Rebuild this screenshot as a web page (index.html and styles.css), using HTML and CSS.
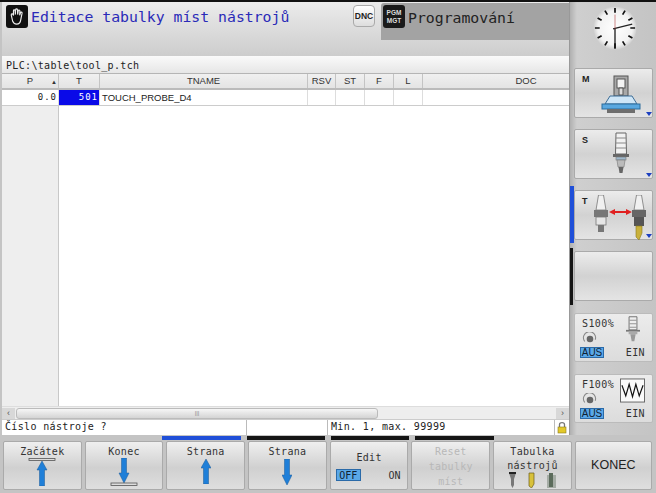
FILE: index.html
```html
<!DOCTYPE html>
<html lang="cs">
<head>
<meta charset="utf-8">
<title>Editace tabulky</title>
<link rel="stylesheet" href="styles.css">
</head>
<body>
<div class="screen">
  <div class="top">
    <main class="main">
      <header class="head">
        <div class="title-row">
          <svg class="hand" width="22" height="23" viewBox="0 0 23 24"><rect width="23" height="24" rx="3" fill="#111"/><path d="M7 17 L5.500 10.500 C5.300 9 7 8.800 7.400 10 L7.800 11 L7.800 6 C7.800 4.800 9.300 4.800 9.500 6 L9.800 10 L10 5 C10.200 3.800 11.800 3.800 12 5 L12.200 10 L12.800 6 C13 4.800 14.500 5 14.500 6.200 L14.300 10.800 L15.200 8 C15.600 7 17 7.300 16.800 8.500 L15.500 15 C15.200 18 14 20 11 20 C9 20 8 19 7 17 Z" fill="none" stroke="#eee" stroke-width="1.200"/></svg>
          <h1 class="title">Editace tabulky míst nástrojů</h1>
        </div>
        <div class="modes">
          <div class="dnc">DNC</div>
          <div class="prog">
            <div class="pgm">PGM<br>MGT</div>
            <span class="prog-name">Programování</span>
          </div>
        </div>
      </header>
      <div class="path">PLC:\table\tool_p.tch</div>
      <div class="table">
        <div class="colhead">
          <div class="c c-p">P<span class="sort">▲</span></div>
          <div class="c c-t">T</div>
          <div class="c c-n">TNAME</div>
          <div class="c c-r">RSV</div>
          <div class="c c-s">ST</div>
          <div class="c c-f">F</div>
          <div class="c c-l">L</div>
          <div class="c c-d">DOC</div>
        </div>
        <div class="row">
          <div class="d c-p ra">0.0</div>
          <div class="d c-t ra sel">501</div>
          <div class="d c-n">TOUCH_PROBE_D4</div>
          <div class="d c-r"></div>
          <div class="d c-s"></div>
          <div class="d c-f"></div>
          <div class="d c-l"></div>
          <div class="d c-d"></div>
        </div>
        <div class="rest">
          <div class="c-p rest-p"></div>
        </div>
      </div>
      <div class="scroll">
        <div class="arrow">‹</div>
        <div class="thumb">|||</div>
        <div class="track"></div>
        <div class="arrow">›</div>
      </div>
      <div class="status">
        <div class="st st-a">Číslo nástroje ?</div>
        <div class="st st-b"></div>
        <div class="st st-c">Min. 1, max. 99999</div>
        <div class="st-d">
          <svg width="10" height="13" viewBox="0 0 10 13"><path d="M2.500 6 V3.500 C2.500 1 7.500 1 7.500 3.500 V6" fill="none" stroke="#777" stroke-width="1.300"/><rect x="1" y="6" width="8" height="6" fill="#e3c92a" stroke="#8a7a20" stroke-width=".6"/></svg>
        </div>
      </div>
    </main>
    <aside class="rail">
      <svg class="clock" width="44" height="44" viewBox="0 0 46 46">
        <defs><radialGradient id="cf"><stop offset="0" stop-color="#fff"/><stop offset=".8" stop-color="#f2f2f2"/><stop offset="1" stop-color="#cfcfcf"/></radialGradient></defs>
        <circle cx="23" cy="23" r="22.500" fill="url(#cf)"/>
        <g stroke="#111" stroke-width="1.800">
          <path d="M23 2V7M23 39V44M2 23H7M39 23H44"/>
          <path d="M33.500 4.800L31 9M41.200 12.500L37 15M41.200 33.500L37 31M33.500 41.200L31 37M12.500 41.200L15 37M4.800 33.500L9 31M4.800 12.500L9 15M12.500 4.800L15 9"/>
        </g>
        <path d="M23 24V45" stroke="#111" stroke-width="1.300"/>
        <path d="M21 24L41 19" stroke="#222" stroke-width="1.300"/>
        <path d="M23 24V9" stroke="#a33" stroke-width=".6"/>
      </svg>
      <div class="side-group">
        <div class="side-item">
          <div class="side-key">
            <span class="k-label">M</span>
            <svg class="k-ico k-m" width="44" height="44" viewBox="0 0 44 44"><rect x="15" y="3" width="14" height="20" fill="#a8a8a8" stroke="#555"/><rect x="18" y="6" width="8" height="9" fill="#f4f4f4" stroke="#555"/><path d="M20 15h4v7h-4z" fill="#ddd" stroke="#555"/><path d="M6 31L11 23H33L38 31Z" fill="#cfe6f7" stroke="#3d6d96"/><rect x="3" y="31" width="38" height="5" fill="#5aa8e0" stroke="#2d6c9c"/><rect x="8" y="36" width="28" height="4" fill="#6e6e6e"/></svg>
            <i class="tri"></i>
          </div>
        </div>
        <div class="side-item">
          <div class="side-key">
            <span class="k-label">S</span>
            <svg class="k-ico k-s" width="44" height="44" viewBox="0 0 44 44"><path d="M17 1H27L27.500 22H16.500Z" fill="#f2f2f2" stroke="#666"/><path d="M17 6H27M17 11H27M17 16H27" stroke="#888"/><rect x="14" y="22" width="16" height="3" fill="#666"/><rect x="17" y="25" width="10" height="3" fill="#9fb8cc" stroke="#777" stroke-width=".6"/><path d="M18 28H26L25 35H19Z" fill="#bbb" stroke="#777" stroke-width=".6"/><path d="M19.500 35H24.500L23.500 41H20.500Z" fill="#666"/></svg>
            <i class="tri"></i>
          </div>
        </div>
        <div class="side-item">
          <i class="side-bar blue"></i>
          <div class="side-key">
            <span class="k-label">T</span>
            <svg class="k-ico k-t" width="56" height="45" viewBox="0 0 56 45"><path d="M3 15L5.500 0H10.500L13 15Z" fill="#f0f0f0" stroke="#777" stroke-width=".8"/><rect x="1" y="15" width="14" height="7" fill="#777"/><rect x="3" y="22" width="10" height="8" fill="#e6e6e6" stroke="#777" stroke-width=".8"/><rect x="5" y="30" width="6" height="7" fill="#777"/><path d="M41 15L43.500 0H48.500L51 15Z" fill="#f0f0f0" stroke="#777" stroke-width=".8"/><rect x="39" y="15" width="14" height="7" fill="#666"/><rect x="41" y="22" width="10" height="9" fill="#555"/><path d="M43 31H49V38L46 45L43 42Z" fill="#c9b13c" stroke="#8a7a20" stroke-width=".6"/><path d="M19 17H36" stroke="#e02020" stroke-width="2"/><path d="M16 17L22 14V20ZM39 17L33 14V20Z" fill="#e02020"/></svg>
            <i class="tri"></i>
          </div>
        </div>
        <div class="side-item">
          <i class="side-bar black"></i>
          <div class="side-key"></div>
        </div>
      </div>
      <div class="ov-group">
        <div class="ov">
          <div class="ov-l">
            <span class="ov-t">S100%</span>
            <svg class="knob" width="16" height="13" viewBox="0 0 16 15"><circle cx="8" cy="8" r="3.800" fill="#666"/><path d="M2 11A7 7 0 1 1 14 9" fill="none" stroke="#888" stroke-width="1.200"/></svg>
            <span class="aus">AUS</span>
          </div>
          <div class="ov-r">
            <svg width="14" height="30" viewBox="0 0 16 30"><path d="M3.500 1H12.500L12.500 16H3.500Z" fill="#eee" stroke="#666"/><path d="M4 5H12M4 9H12M4 13H12" stroke="#888"/><rect x="0" y="16" width="16" height="2" fill="#777"/><rect x="3" y="18" width="10" height="3" fill="#aaa"/><path d="M5 21H11L9.500 29H6.500Z" fill="#999"/></svg>
            <span class="ein">EIN</span>
          </div>
        </div>
        <div class="ov">
          <div class="ov-l">
            <span class="ov-t">F100%</span>
            <svg class="knob" width="16" height="13" viewBox="0 0 16 15"><circle cx="8" cy="8" r="3.800" fill="#666"/><path d="M2 11A7 7 0 1 1 14 9" fill="none" stroke="#888" stroke-width="1.200"/></svg>
            <span class="aus">AUS</span>
          </div>
          <div class="ov-r">
            <svg class="wave" width="25" height="25" viewBox="0 0 26 25"><rect x=".5" y=".5" width="25" height="24" fill="#fafafa" stroke="#666"/><path d="M2 7L6 18L9.500 6L13 19L16.500 6L20 18L24 7" fill="none" stroke="#111" stroke-width="1.200"/></svg>
            <span class="ein">EIN</span>
          </div>
        </div>
      </div>
    </aside>
  </div>
  <div class="softs">
    <div class="bars">
      <i class="sb on"></i>
      <i class="sb dark"></i>
      <i class="sb dark"></i>
      <i class="sb dark"></i>
    </div>
    <div class="keys">
      <div class="soft"><span>Začátek</span>
        <svg width="28" height="28" viewBox="0 0 28 28"><rect x="1" y=".5" width="26" height="2" fill="#ddd" stroke="#555" stroke-width=".8"/><path d="M14 3L19 12H16.500V28H11.500V12H9Z" fill="#1f7fd8" stroke="#1a5a99" stroke-width=".5"/></svg></div>
      <div class="soft"><span>Konec</span>
        <svg width="28" height="28" viewBox="0 0 28 28"><path d="M11.500 0H16.500V15H19L14 25L9 15H11.500Z" fill="#1f7fd8" stroke="#1a5a99" stroke-width=".5"/><rect x="1" y="25" width="26" height="2.500" fill="#ddd" stroke="#555" stroke-width=".8"/></svg></div>
      <div class="soft"><span class="lab">Strana</span>
        <svg class="dn1" width="10" height="25" viewBox="0 0 10 25"><path d="M5 0L10 9H7.500V25H2.500V9H0Z" fill="#1f7fd8" stroke="#1a5a99" stroke-width=".5"/></svg></div>
      <div class="soft"><span class="lab">Strana</span>
        <svg class="dn1" width="10" height="26" viewBox="0 0 10 26"><path d="M2.500 0H7.500V16H10L5 26L0 16H2.500Z" fill="#1f7fd8" stroke="#1a5a99" stroke-width=".5"/></svg></div>
      <div class="soft soft-edit"><span>Edit</span>
        <div class="onoff"><b class="off">OFF</b><b class="on-t">ON</b></div></div>
      <div class="soft soft-off"><span>Reset</span><span>tabulky</span><span>míst</span></div>
      <div class="soft soft-tab"><span>Tabulka</span><span>nástrojů</span>
        <svg class="tab-ico" width="52" height="16" viewBox="0 0 52 16"><path d="M3 1H10L8 7V13L6.500 16L5 13V7Z" fill="#777"/><path d="M3 1H10" stroke="#222" stroke-width="2"/><path d="M23 1H28V12L25.500 16L23 14Z" fill="#d8c13a" stroke="#6b5d1a" stroke-width=".7"/><rect x="41" y="3" width="9" height="13" fill="#a5aca5"/><rect x="43" y="1" width="4" height="14" fill="#5b6b5b"/></svg></div>
      <div class="soft soft-end">KONEC</div>
    </div>
  </div>
</div>
</body>
</html>
```

FILE: styles.css
```css
* { box-sizing: border-box; }
html, body { margin: 0; padding: 0; }
body { width: 656px; height: 493px; overflow: hidden; background: #c4c4c4; font-family: "Liberation Mono", monospace; color: #222; }
i { display: block; }
.screen { width: 656px; height: 493px; display: flex; flex-direction: column; border-top: 2px solid #111; }
.top { display: flex; height: 433px; }
.main { width: 568px; margin-left: 2px; display: flex; flex-direction: column; background: #fff; border-right: 1px solid #999; }
.head { height: 54px; display: flex; justify-content: space-between; background: linear-gradient(#ececec, #e2e2e2 30%, #cdcdcd); }
.title-row { display: flex; align-items: flex-start; gap: 3px; padding: 3px 0 0 4px; }
.hand { flex: none; }
.title { margin: 1px 0 0; font: 400 14.800px/22px "DejaVu Sans Mono", monospace; color: #2a2ab8; white-space: nowrap; }
.modes { display: flex; align-items: flex-start; gap: 6px; }
.dnc { margin-top: 3px; width: 22px; height: 22px; border: 1px solid #aaa; border-radius: 4px; background: linear-gradient(#fff, #ddd); font: 700 8.500px/20px "Liberation Sans", sans-serif; text-align: center; color: #222; }
.prog { width: 188px; height: 37px; margin-top: 1px; background: #a3a3a3; border-top-left-radius: 3px; display: flex; align-items: flex-start; gap: 3px; padding: 2px 0 0 2px; }
.pgm { width: 22px; height: 23px; background: #1a1a1a; border-radius: 3px; color: #ddd; font: 700 6.500px/8px "Liberation Sans", sans-serif; text-align: center; padding-top: 4px; }
.prog-name { margin-top: 2px; font: 400 14.800px/22px "DejaVu Sans Mono", monospace; color: #222; }
.path { height: 17px; padding: 3px 0 0 4px; font: 400 10px/13px "DejaVu Sans Mono", monospace; background: linear-gradient(#fafafa, #e6e6e6); letter-spacing: .33px; }
.table { flex: 1; display: flex; flex-direction: column; min-height: 0; overflow: hidden; }
.colhead { height: 17px; display: flex; overflow: hidden; background: linear-gradient(#f0f0f0, #e4e4e4); border-top: 1px solid #b5b5b5; border-bottom: 2px solid #bbb; }
.row { height: 16px; display: flex; overflow: hidden; border-bottom: 1px solid #ccc; }
.c { font: 400 9.500px/14px "Liberation Sans", sans-serif; text-align: center; border-right: 1px solid #c4c4c4; color: #333; position: relative; }
.d { font: 400 9.500px/15px "Liberation Sans", sans-serif; border-right: 1px solid #ddd; white-space: nowrap; padding: 0 2px; color: #222; }
.ra { text-align: right; letter-spacing: 1px; font-family: "DejaVu Sans Mono", monospace; font-size: 9px; padding-right: 1px; }
.c-p { width: 57px; flex: none; }
.c-t { width: 41px; flex: none; }
.c-n { width: 208px; flex: none; }
.c-r { width: 28px; flex: none; }
.c-s { width: 29px; flex: none; }
.c-f { width: 29px; flex: none; }
.c-l { width: 29px; flex: none; }
.c-d { width: 206px; flex: none; border-right: none; }
.sort { position: absolute; right: 1px; top: 1px; font-size: 6px; }
.sel { background: #0a0ae8; color: #fff; }
.rest { flex: 1; display: flex; }
.rest-p { background: #eeeeee; border-right: 1px solid #c8c8c8; }
.scroll { height: 13px; display: flex; align-items: center; background: #eee; border-top: 1px solid #ddd; }
.arrow { width: 13px; height: 11px; flex: none; background: #d8d8d8; font: 400 9px/10px "Liberation Sans", sans-serif; text-align: center; color: #555; }
.thumb { width: 362px; height: 11px; margin-left: 1px; border: 1px solid #bbb; border-radius: 3px; background: linear-gradient(#f6f6f6, #d4d4d4); font: 400 6px/9px "Liberation Sans", sans-serif; text-align: center; color: #888; flex: none; }
.track { flex: 1; }
.status { height: 16px; display: flex; background: #fff; border-top: 1px solid #ccc; }
.st { font: 400 10px/14px "DejaVu Sans Mono", monospace; padding-left: 3px; border-right: 1px solid #bbb; white-space: nowrap; letter-spacing: .35px; }
.st-a { width: 245px; }
.st-b { width: 81px; }
.st-c { flex: 1; }
.st-d { width: 14px; display: flex; align-items: center; justify-content: center; }
.rail { flex: 1; padding-top: 4px; display: flex; flex-direction: column; align-items: center; background: linear-gradient(90deg, #b0b0b0, #cfcfcf 8%, #c4c4c4); }
.clock { flex: none; margin-left: 3px; }
.side-group { margin-top: 18px; display: flex; flex-direction: column; gap: 11px; width: 100%; }
.side-item { position: relative; height: 50px; padding-left: 4px; }
.side-bar { position: absolute; left: 0; top: -4px; width: 4px; height: 57px; background: #1f4fd8; }
.side-bar.black { background: #151515; top: -3px; width: 3px; }
.side-key { position: relative; width: 79px; height: 100%; display: flex; justify-content: center; border: 1px solid #aaa; border-radius: 2px; background: linear-gradient(#ececec, #d2d2d2 50%, #e4e4e4); }
.k-label { position: absolute; left: 7px; top: 4px; font: 700 9px/12px "Liberation Sans", sans-serif; color: #222; }
.k-ico { display: block; flex: none; }
.k-m { margin: 4px 0 0 14px; }
.k-s { margin: 2px 0 0 15px; }
.k-t { margin: 4px 0 0 15px; }
.tri { position: absolute; right: 0; bottom: 1px; width: 0; height: 0; border-left: 3px solid transparent; border-right: 3px solid transparent; border-top: 4px solid #1c3fc0; }
.ov-group { margin-top: 12px; display: flex; flex-direction: column; gap: 12px; width: 100%; padding-left: 4px; }
.ov { width: 79px; height: 49px; display: flex; justify-content: space-between; padding: 0 7px 3px 5px; border: 1px solid #bbb; border-radius: 2px; background: linear-gradient(#ececec, #dcdcdc); }
.ov-l, .ov-r { display: flex; flex-direction: column; justify-content: space-between; }
.ov-l { align-items: flex-start; padding-top: 5px; }
.ov-r { width: 25px; align-items: center; }
.ov-t { margin-left: 2px; font: 400 10px/10px "DejaVu Sans Mono", monospace; letter-spacing: .4px; color: #333; }
.knob { display: block; margin-left: 2px; }
.aus { width: 24px; height: 11px; background: #5aa8e8; border: 1px solid #2a6aa8; font: 400 10px/9px "Liberation Sans", sans-serif; text-align: center; color: #123; }
.ein { align-self: flex-end; font: 400 10px/10px "DejaVu Sans Mono", monospace; letter-spacing: .4px; color: #333; }
.wave { margin-top: 3px; }
.softs { height: 58px; display: flex; flex-direction: column; background: #c4c4c4; }
.bars { display: grid; grid-template-columns: 79px 78px 78px 79px; column-gap: 6px; height: 6px; padding: 1px 0 1px 162px; }
.sb { height: 4px; }
.sb.on { background: #1f4fd8; }
.sb.dark { background: #151515; }
.keys { display: flex; gap: 3px; padding-left: 3px; }
.soft { width: 78.700px; height: 49px; flex: none; display: flex; flex-direction: column; align-items: center; padding-top: 3px; border: 1px solid #aaa; border-radius: 2px; background: linear-gradient(#efefef, #d0d0d0 55%, #dedede); font: 400 10px/13px "DejaVu Sans Mono", monospace; letter-spacing: .3px; color: #333; }
.soft svg { display: block; flex: none; }
.dn1 { margin-top: 1px; }
.soft-edit { padding-top: 9px; }
.onoff { width: 100%; display: flex; justify-content: space-between; align-items: flex-end; margin-top: 5px; padding: 0 7px 0 5px; }
.onoff b { font: 400 10px/11px "DejaVu Sans Mono", monospace; letter-spacing: 0; }
.off { width: 25px; height: 12px; background: #5aa8e8; border: 1px solid #2a6aa8; color: #123; text-align: center; }
.soft-off { color: #b8b8b8; line-height: 15px; padding-top: 2px; }
.soft-tab { line-height: 14px; padding-top: 3px; }
.tab-ico { margin-top: -1px; }
.soft-end { width: 77px; font: 400 12.500px/47px "Liberation Sans", sans-serif; padding-top: 0; letter-spacing: 0; color: #222; }
```
